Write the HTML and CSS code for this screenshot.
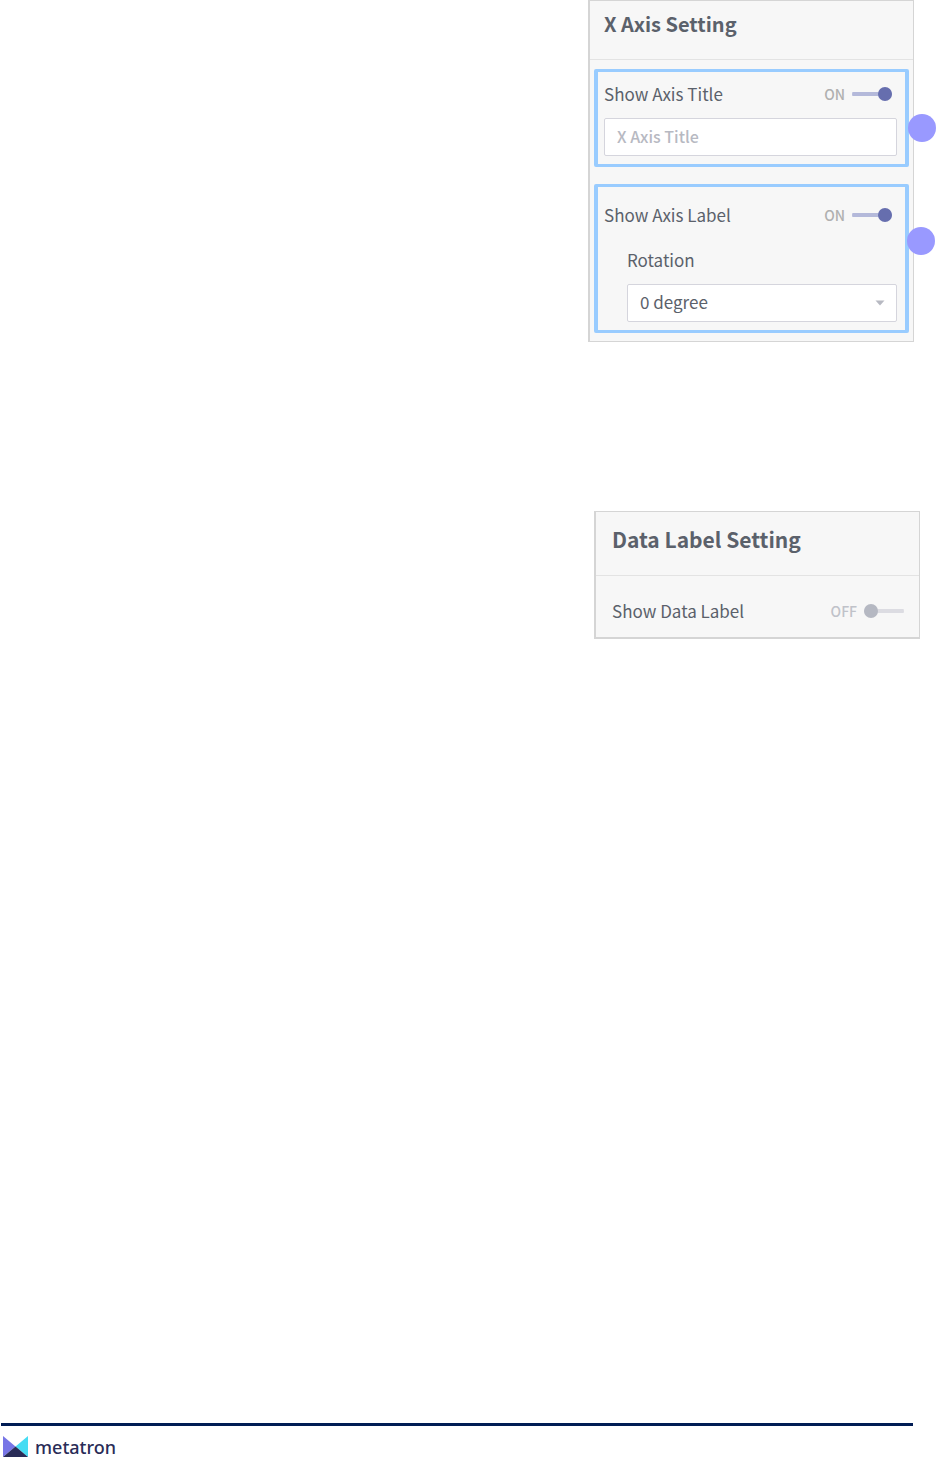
FILE: index.html
```html
<!DOCTYPE html>
<html lang="en">
<head>
    <meta charset="UTF-8">
    <meta name="viewport" content="width=device-width, initial-scale=1.0">
    <title>Chart Settings</title>
    <link rel="stylesheet" href="styles.css">
</head>
<body>
    <main class="content">
        <section class="panel axis-panel">
            <h2 class="panel-title">X Axis Setting</h2>
            <div class="panel-body">
                <div class="group">
                    <div class="row">
                        <label for="showAxisTitle">Show Axis Title</label>
                        <span class="state">ON</span>
                        <input type="checkbox" class="switch" id="showAxisTitle" checked>
                    </div>
                    <input type="text" class="field" placeholder="X Axis Title" aria-label="X Axis Title">
                    <span class="marker"></span>
                </div>
                <div class="group label-group">
                    <div class="row">
                        <label for="showAxisLabel">Show Axis Label</label>
                        <span class="state">ON</span>
                        <input type="checkbox" class="switch" id="showAxisLabel" checked>
                    </div>
                    <div class="sub">
                        <label class="sub-label" for="rotation">Rotation</label>
                        <div class="select-wrap">
                            <select class="field" id="rotation">
                                <option selected>0 degree</option>
                            </select>
                            <svg class="arrow" width="10" height="6" viewBox="0 0 10 6"><path d="M0.5 0.5h9L5 5.5z" fill="#b7b9c2"/></svg>
                        </div>
                    </div>
                    <span class="marker"></span>
                </div>
            </div>
        </section>

        <section class="panel data-panel">
            <h2 class="panel-title">Data Label Setting</h2>
            <div class="panel-body">
                <div class="row">
                    <label for="showDataLabel">Show Data Label</label>
                    <span class="state off">OFF</span>
                    <input type="checkbox" class="switch" id="showDataLabel">
                </div>
            </div>
        </section>
    </main>

    <footer class="footer">
        <svg class="logo" width="25" height="21" viewBox="0 0 25 21">
            <path d="M0 0L12.5 10.5L0 21z" fill="#7775e6"/>
            <path d="M25 0L12.5 10.5L25 21z" fill="#46dcf3"/>
            <path d="M0 21L12.5 10.5L25 21z" fill="#292c57"/>
        </svg>
        <span class="brand">metatron</span>
    </footer>
</body>
</html>
```
FILE: styles.css
```css
* {
    box-sizing: border-box;
}
body {
    margin: 0;
    min-height: 100vh;
    display: flex;
    flex-direction: column;
    background: #fff;
    color: #5b616b;
    font-family: "Noto Sans CJK KR", "Noto Sans", sans-serif;
    font-size: 17px;
    line-height: 28px;
}
.content {
    flex: 1;
    display: flex;
    flex-direction: column;
    align-items: flex-end;
    gap: 169px;
}
.panel {
    width: 326px;
    background: #f7f7f7;
    border: 1px solid #d5d5d5;
    border-left-width: 2px;
}
.panel-title {
    margin: 0;
    font-size: 21px;
    font-weight: bold;
    line-height: 28px;
    border-bottom: 1px solid #e3e3e3;
}
.axis-panel {
    margin-right: 23px;
}
.axis-panel .panel-title {
    padding: 9px 14px 21px;
    font-size: 20px;
}
.axis-panel .panel-body {
    display: flex;
    flex-direction: column;
    gap: 17px;
    padding: 9px 4px 8px;
}
.data-panel {
    margin-right: 17px;
    border-bottom-width: 2px;
}
.data-panel .panel-title {
    padding: 13px 16px 22px;
}
.data-panel .panel-body {
    padding: 21px 10px 12px 16px;
}
.group {
    position: relative;
    padding: 8px;
    padding-left: 6px;
    border: 3px solid #99ccff;
    border-width: 3px 4px;
    border-radius: 2px;
}
.label-group {
    padding-top: 14px;
}
.row {
    display: flex;
    align-items: center;
    padding-right: 5px;
}
.state {
    margin-left: auto;
    margin-right: 7px;
    font-size: 14px;
    font-weight: 500;
    color: #b0b0b0;
}
.state.off {
    color: #c0c2c9;
}
.switch {
    appearance: none;
    display: flex;
    align-items: center;
    width: 40px;
    height: 14px;
    margin: 0;
    background: linear-gradient(#dcdce2, #dcdce2) center / 100% 4px no-repeat;
    border-radius: 7px;
    cursor: pointer;
}
.switch::before {
    content: "";
    width: 14px;
    height: 14px;
    border-radius: 50%;
    background: #b5b8c2;
}
.switch:checked {
    justify-content: flex-end;
    background-image: linear-gradient(#b4b9da, #b4b9da);
}
.switch:checked::before {
    background: #666eae;
}
.field {
    appearance: none;
    display: block;
    width: 100%;
    height: 38px;
    padding: 0 12px 3px;
    background: #fff;
    border: 1px solid #d5d5dd;
    border-radius: 2px;
    color: inherit;
    font: inherit;
}
.field::placeholder {
    color: #b7b9c2;
    font-size: 16px;
    font-weight: 500;
    opacity: 1;
}
.group > .field {
    margin-top: 10px;
}
.sub {
    padding: 17px 0 0 23px;
}
.sub-label {
    display: block;
    margin-bottom: 10px;
}
.select-wrap {
    position: relative;
}
.arrow {
    position: absolute;
    top: 16px;
    right: 12px;
    pointer-events: none;
}
.marker {
    position: absolute;
    top: 42px;
    right: -31px;
    width: 28px;
    height: 28px;
    border-radius: 50%;
    background: #9999ff;
}
.label-group .marker {
    top: 40px;
    right: -30px;
}
.footer {
    display: flex;
    align-items: flex-end;
    gap: 7px;
    margin: 0 24px 0 1px;
    padding: 10px 2px 0;
    border-top: 3px solid #001c54;
}
.brand {
    font-family: "Noto Sans", sans-serif;
    font-size: 18px;
    font-weight: 500;
    line-height: 20px;
    color: #292c57;
}
```
